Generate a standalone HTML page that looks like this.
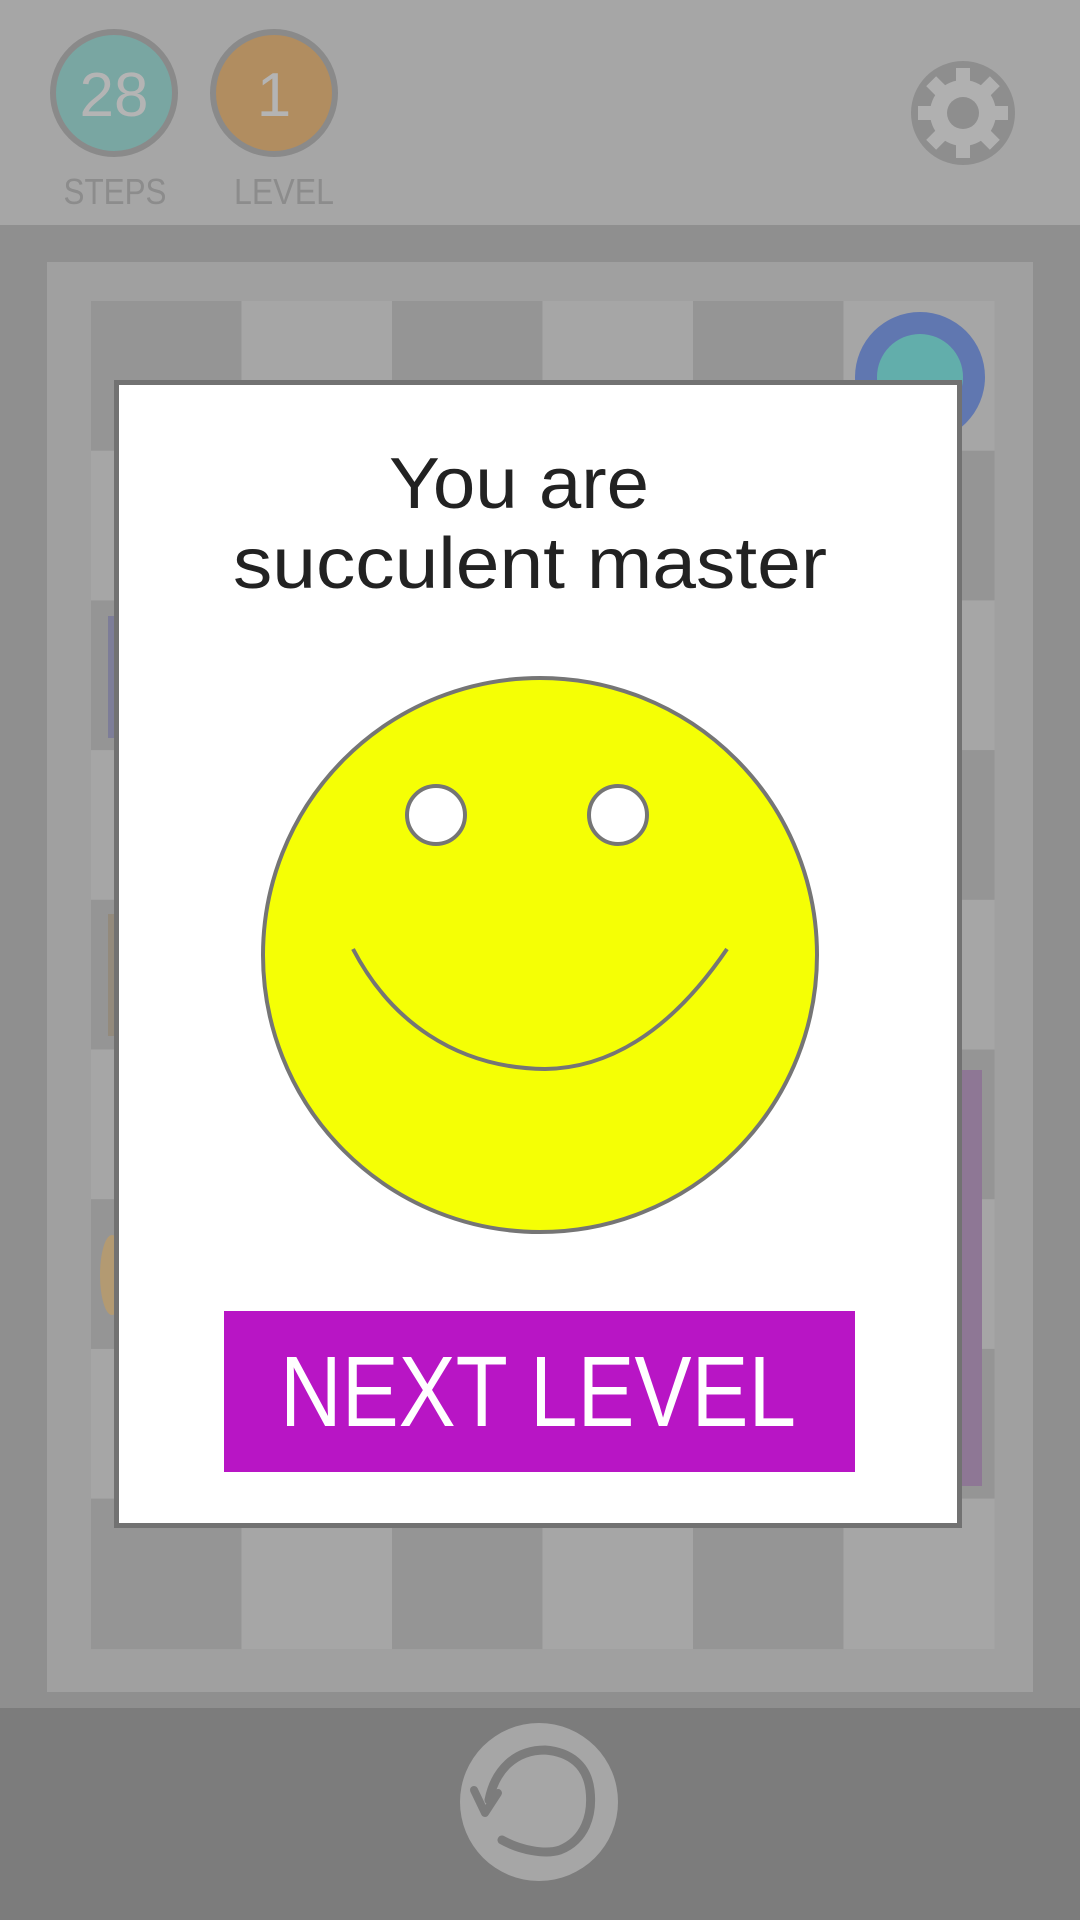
<!DOCTYPE html>
<html><head><meta charset="utf-8"><style>html,body{margin:0;padding:0;width:1080px;height:1920px;overflow:hidden;background:#8f8f8f}svg{display:block}</style></head><body>
<svg width="1080" height="1920" viewBox="0 0 1080 1920" xmlns="http://www.w3.org/2000/svg" font-family="Liberation Sans, sans-serif">
<rect x="0" y="0" width="1080" height="225" fill="#a6a6a6"/>
<rect x="0" y="225" width="1080" height="1483" fill="#8f8f8f"/>
<rect x="47" y="262" width="986" height="1430" fill="#a0a0a0"/>
<g id="grid"></g>
<rect x="108" y="616" width="10" height="122" fill="#7d7d98"/>
<rect x="108" y="914" width="10" height="122" fill="#938a7c"/>
<ellipse cx="112" cy="1275" rx="12" ry="40" fill="#b39a72"/>
<rect x="962" y="1070" width="20" height="416" fill="#8e7795"/>
<circle cx="920" cy="377" r="65" fill="#6077b0"/>
<circle cx="920" cy="377" r="43" fill="#62aeab"/>
<circle cx="114" cy="93" r="61" fill="#79a6a2" stroke="#8a8a8a" stroke-width="6"/>
<text x="114" y="116" font-size="62" fill="#b4b4b4" text-anchor="middle">28</text>
<circle cx="274" cy="93" r="61" fill="#b18d60" stroke="#8a8a8a" stroke-width="6"/>
<text x="274" y="116" font-size="62" fill="#b4b4b4" text-anchor="middle">1</text>
<text x="115" y="204" font-size="36" fill="#8c8c8c" text-anchor="middle" textLength="103" lengthAdjust="spacingAndGlyphs">STEPS</text>
<text x="284" y="204" font-size="36" fill="#8c8c8c" text-anchor="middle" textLength="100" lengthAdjust="spacingAndGlyphs">LEVEL</text>
<g transform="translate(963,113)">
<circle r="52" fill="#8e8e8e"/>
<g fill="#b0b0b0">
<circle r="33"/>
<g id="t"><rect x="-7" y="-45" width="14" height="16"/></g>
<use href="#t" transform="rotate(45)"/><use href="#t" transform="rotate(90)"/><use href="#t" transform="rotate(135)"/><use href="#t" transform="rotate(180)"/><use href="#t" transform="rotate(225)"/><use href="#t" transform="rotate(270)"/><use href="#t" transform="rotate(315)"/>
</g>
<circle r="16" fill="#8e8e8e"/>
</g>
<rect x="0" y="1708" width="1080" height="212" fill="#7c7c7c"/>
<circle cx="539" cy="1802" r="79" fill="#a6a6a6"/>
<path d="M502 1840 C520 1850 545 1855 560 1850 C585 1840 593 1815 590 1790 C587 1765 570 1752 545 1750 C515 1750 495 1770 489 1800" fill="none" stroke="#7c7c7c" stroke-width="9" stroke-linecap="round"/>
<path d="M474 1790 L485 1813 L498 1793" fill="none" stroke="#7c7c7c" stroke-width="8" stroke-linecap="round" stroke-linejoin="round"/>
<rect x="116.5" y="382.5" width="843" height="1143" fill="#fff" stroke="#727272" stroke-width="5"/>
<text x="519" y="508" font-size="72" fill="#222" text-anchor="middle" textLength="260" lengthAdjust="spacingAndGlyphs">You are</text>
<text x="530" y="588" font-size="72" fill="#222" text-anchor="middle" textLength="594" lengthAdjust="spacingAndGlyphs">succulent master</text>
<circle cx="540" cy="955" r="277" fill="#f5ff05" stroke="#757575" stroke-width="4"/>
<circle cx="436" cy="815" r="29" fill="#fff" stroke="#757575" stroke-width="4"/>
<circle cx="618" cy="815" r="29" fill="#fff" stroke="#757575" stroke-width="4"/>
<path d="M353 949 C390 1020 455 1068 545 1069 C620 1068 680 1018 727 949" fill="none" stroke="#757575" stroke-width="4"/>
<rect x="224" y="1311" width="631" height="161" fill="#b815c5"/>
<text x="538" y="1426" font-size="100" fill="#fff" text-anchor="middle" textLength="516" lengthAdjust="spacingAndGlyphs">NEXT LEVEL</text>
</svg>
<script>
var g=document.getElementById('grid'),s='';
for(var r=0;r<9;r++)for(var c=0;c<6;c++){
var x=91+c*150.5,y=301+r*149.7;
s+='<rect x="'+x+'" y="'+y+'" width="151" height="150.5" fill="'+((r+c)%2?'#a6a6a6':'#959595')+'"/>';}
g.innerHTML=s;
</script>
</body></html>
